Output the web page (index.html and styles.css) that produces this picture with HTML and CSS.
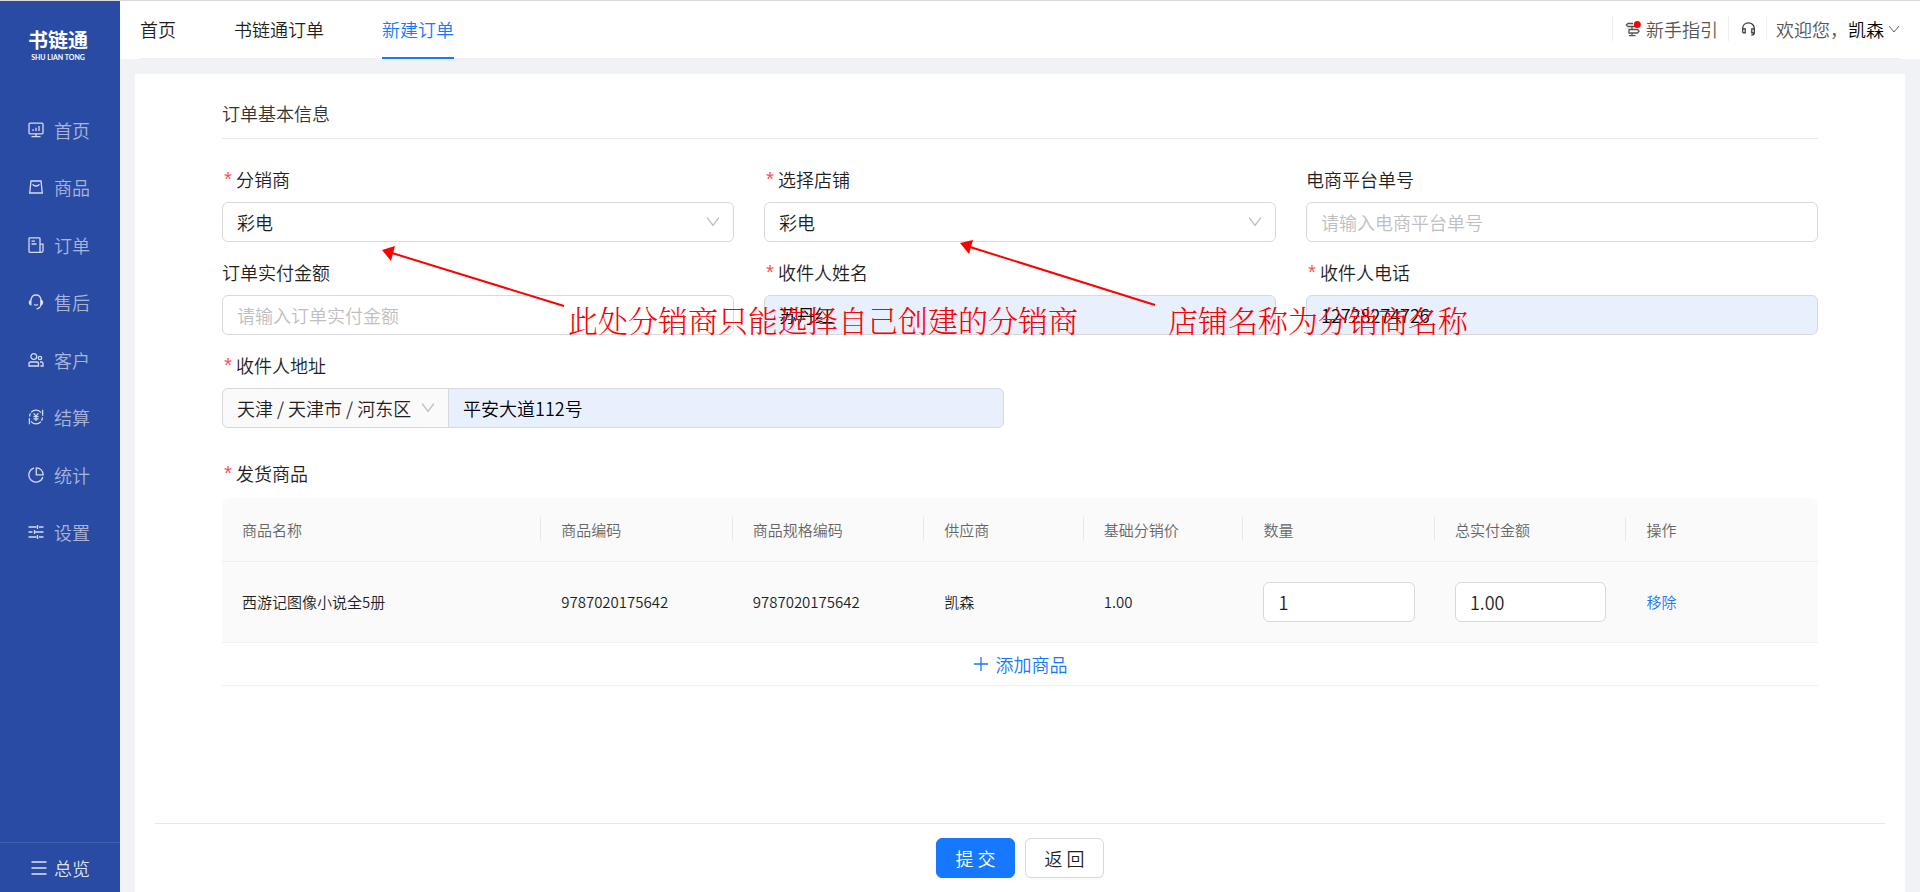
FILE: index.html
```html
<!DOCTYPE html>
<html lang="zh-CN">
<head>
<meta charset="utf-8">
<title>新建订单 - 书链通</title>
<link rel="stylesheet" href="styles.css">
</head>
<body>
<div class="app">
  <aside class="sidebar">
    <div class="logo">
      <span class="logo-name">书链通</span>
      <span class="logo-sub">SHU LIAN TONG</span>
    </div>
    <nav class="menu">
      <a class="menu-item" href="#"><svg class="icon" viewBox="0 0 16 16"><rect x="1" y="1.2" width="14" height="10.6" rx="1"/><path d="M8 12v2.4M3.5 14.7h9M5 9V7.2M8 9V5.8M11 9V4"/></svg>首页</a>
      <a class="menu-item" href="#"><svg class="icon" viewBox="0 0 16 16"><path d="M3 2h10l1.3 12H1.7zM4.8 5.2c.6 2.4 5.800 2.400 6.400 0"/></svg>商品</a>
      <a class="menu-item" href="#"><svg class="icon" viewBox="0 0 16 16"><path d="M12 15.300H1.700a.7.7 0 0 1-.7-.7V1.500a.7.7 0 0 1 .7-.7h9.600a.7.7 0 0 1 .7.7zM12 7.200h3v6.600a1.500 1.500 0 0 1-3 0M3.500 4.200h3.500M3.500 7h5"/></svg>订单</a>
      <a class="menu-item" href="#"><svg class="icon" viewBox="0 0 16 16"><path d="M3 6C3.300 3 5.200 1 8 1s4.700 2 5 5v4c-.2 3-2 4.600-4.500 4.900M6 10.500c1.200.8 2.800.8 4 0"/><path class="solid" d="M3.500 5.500v6C-.2 11.300-.2 5.700 3.500 5.500zM12.500 5.500v6c3.700-.2 3.700-5.800 0-6z"/></svg>售后</a>
      <a class="menu-item" href="#"><svg class="icon" viewBox="0 0 16 16"><circle cx="5.800" cy="4.500" r="2.900"/><circle cx="12" cy="6" r="1.700"/><path d="M1 14v-2.300C1 10.500 2 10 3 10h5.500c1.500 0 2 .8 2 1.700V14zM12 10h1.300c1.200 0 1.700.8 1.700 1.600V14h-2.600"/></svg>客户</a>
      <a class="menu-item" href="#"><svg class="icon" viewBox="0 0 16 16"><path d="M3.200 3.200C6 .2 10.500.4 13 3.600M14.600.8v6M12.800 12.800C10 15.800 5.500 15.600 3 12.400M1.400 15.200v-6M14.400 8.500c0 1.200-.3 2.300-.9 3.200M1.600 7.500c0-1.200.3-2.300.9-3.200M5.700 4.300 8 7.200l2.300-2.900M8 7.200V12M5.500 7.700h5M5.500 9.900h5"/></svg>结算</a>
      <a class="menu-item" href="#"><svg class="icon" viewBox="0 0 16 16"><path d="M6 1.200a7.100 7.100 0 1 0 8.800 8.800M8.300.8v7h6.900a7 7 0 0 0-6.900-7z"/></svg>统计</a>
      <a class="menu-item" href="#"><svg class="icon" viewBox="0 0 16 16"><path d="M.5 3h8M11 3h4.500M9.500 1v4M.5 8h4M6.500 8h9M6.500 6v4M.5 13h8M11 13h4.500M9.500 11v4"/></svg>设置</a>
    </nav>
    <a class="overview" href="#"><svg class="icon" viewBox="0 0 16 16"><path d="M.5 2h15M.5 8h15M.5 14h15"/></svg>总览</a>
  </aside>

  <div class="main">
    <header class="header">
      <div class="header-inner">
        <nav class="tabs">
          <a class="tab" href="#">首页</a>
          <a class="tab" href="#">书链通订单</a>
          <a class="tab tab-active" href="#">新建订单</a>
        </nav>
        <div class="tools">
          <a class="tool" href="#"><svg class="icon guide-icon" viewBox="0 0 16 16"><path d="M8 2.500H3L1.300 4 3 5.500h9M7 5.500V8.500M4 8.500h8.500l1.500 1.700-1.500 1.800H4zM7 12v2.500M4 14.700h6.500"/><circle class="dot" cx="12.300" cy="3.500" r="3.500"/></svg>新手指引</a>
          <a class="tool" href="#" aria-label="客服"><svg class="icon headset-icon" viewBox="0 0 16 16"><path d="M1.800 9V7.500C1.800 4 4.500 1.500 8 1.500s6.200 2.500 6.200 6V12c0 1.500-1 2.500-3.200 2.500M1.800 7.800h2.700v4.400H3c-.8 0-1.200-.5-1.200-1.200zM14.200 7.800h-2.700v4.400h2.700"/></svg></a>
          <a class="tool" href="#"><span>欢迎您，<span class="user">凯森</span></span><svg class="chevron-small" viewBox="0 0 12 12"><path d="M1 3l5 6 5-6"/></svg></a>
        </div>
      </div>
    </header>

    <main class="card">
      <form class="form">
        <h1 class="section-title">订单基本信息</h1>
        <div class="fields">
          <div class="field">
            <label class="label required" for="dealer">分销商</label>
            <div class="select-box"><select class="control" id="dealer"><option>彩电</option></select><svg class="chevron" viewBox="0 0 12 12"><path d="M0 1.500l6 8 6-8"/></svg></div>
          </div>
          <div class="field">
            <label class="label required" for="shop">选择店铺</label>
            <div class="select-box"><select class="control" id="shop"><option>彩电</option></select><svg class="chevron" viewBox="0 0 12 12"><path d="M0 1.500l6 8 6-8"/></svg></div>
          </div>
          <div class="field">
            <label class="label" for="platform">电商平台单号</label>
            <input class="control" id="platform" type="text" placeholder="请输入电商平台单号">
          </div>
          <div class="field">
            <label class="label" for="amount">订单实付金额</label>
            <input class="control" id="amount" type="text" placeholder="请输入订单实付金额">
          </div>
          <div class="field">
            <label class="label required" for="name">收件人姓名</label>
            <input class="control filled" id="name" type="text" value="苏丹红">
          </div>
          <div class="field">
            <label class="label required" for="phone">收件人电话</label>
            <input class="control filled" id="phone" type="text" value="12728274726">
          </div>
          <div class="field field-wide">
            <label class="label required" for="address">收件人地址</label>
            <div class="address">
              <div class="select-box region"><select class="control" aria-label="地区"><option>天津 / 天津市 / 河东区</option></select><svg class="chevron" viewBox="0 0 12 12"><path d="M0 1.500l6 8 6-8"/></svg></div>
              <input class="control filled street" id="address" type="text" value="平安大道112号">
            </div>
          </div>
        </div>

        <h2 class="label required goods-title">发货商品</h2>
        <table class="goods">
          <colgroup><col class="c20"><col class="c12"><col class="c12"><col class="c10"><col class="c10"><col class="c12"><col class="c12"><col class="c12"></colgroup>
          <thead>
            <tr><th>商品名称</th><th>商品编码</th><th>商品规格编码</th><th>供应商</th><th>基础分销价</th><th>数量</th><th>总实付金额</th><th>操作</th></tr>
          </thead>
          <tbody>
            <tr>
              <td>西游记图像小说全5册</td><td>9787020175642</td><td>9787020175642</td><td>凯森</td><td>1.00</td>
              <td><input class="control" type="text" value="1" aria-label="数量"></td>
              <td><input class="control" type="text" value="1.00" aria-label="总实付金额"></td>
              <td><a class="link" href="#">移除</a></td>
            </tr>
          </tbody>
        </table>
        <button class="add" type="button"><svg class="icon" viewBox="0 0 16 16"><path d="M8 1v14M1 8h14"/></svg>添加商品</button>
      </form>
      <footer class="actions">
        <button class="btn btn-primary" type="button">提 交</button>
        <button class="btn" type="button">返 回</button>
      </footer>
    </main>
  </div>

  <svg class="arrows" aria-hidden="true"><path class="line" d="M564 306 392 253M1155 305 970 247"/><path class="head" d="M382 250l13-4-4 15zM960 243l13-3-4 14z"/></svg>
  <p class="note note-dealer">此处分销商只能选择自己创建的分销商</p>
  <p class="note note-shop">店铺名称为分销商名称</p>
</div>
</body>
</html>
```

FILE: styles.css
```css
* { box-sizing: border-box; }

body {
  margin: 0;
  font-family: "Noto Sans CJK SC", sans-serif;
  font-weight: 350;
  font-size: 18px;
  line-height: 28px;
  color: #1f1f1f;
  background: #f0f2f5;
}

a { color: inherit; text-decoration: none; }

input, select, button {
  font: inherit;
  color: inherit;
}

.app {
  position: relative;
  display: flex;
  min-height: 100vh;
  border-top: 1px solid #d9d9d9;
}

.icon {
  flex: none;
  width: 16px;
  height: 16px;
  fill: none;
  stroke: currentColor;
  stroke-width: 1.3;
}

.icon .solid { fill: currentColor; stroke: none; }

/* Sidebar */
.sidebar {
  flex: none;
  display: flex;
  flex-direction: column;
  width: 120px;
  color: rgba(255, 255, 255, 0.6);
  background: #294ba3;
}

.logo {
  display: flex;
  flex-direction: column;
  align-items: center;
  height: 100px;
  padding: 27px 4px 0 0;
  color: #fff;
}

.logo-name {
  font-size: 20px;
  font-weight: 700;
  line-height: 24px;
}

.logo-sub {
  font-family: Lato, sans-serif;
  font-size: 7px;
  font-weight: 700;
  line-height: 10px;
}

.menu {
  display: grid;
  grid-auto-rows: 1fr;
  height: 460px;
}

.menu-item, .overview {
  display: flex;
  align-items: center;
  gap: 10px;
  padding-left: 28px;
}

.menu-item .icon { color: rgba(255, 255, 255, 0.8); }

.overview {
  gap: 7px;
  height: 50px;
  margin-top: auto;
  padding-left: 31px;
  border-top: 1px solid rgba(255, 255, 255, 0.12);
  color: rgba(255, 255, 255, 0.85);
}

/* Header */
.main {
  flex: 1;
  min-width: 0;
  display: flex;
  flex-direction: column;
}

.header {
  padding: 0 20px;
  background: #fff;
}

.header-inner {
  display: flex;
  justify-content: space-between;
  height: 58px;
  box-shadow: inset 0 -1px #f0f0f0;
}

.tabs { display: flex; gap: 58px; }

.tab {
  padding-top: 14px;
  border-bottom: 2px solid transparent;
}

.tab-active { color: #1677ff; border-color: #1677ff; }

.tools {
  display: flex;
  padding-top: 15px;
  color: #555;
}

.tool {
  display: flex;
  align-items: center;
  height: 25px;
  padding: 0 10px 0 12px;
  border-left: 1px solid #eee;
}

.tool:last-child { padding: 0 0 0 9px; }

.guide-icon { margin-right: 5px; }
.guide-icon .dot { fill: #f00; stroke: none; }
.headset-icon { width: 15px; stroke: #333; }
.user { color: #000; }

.chevron-small {
  width: 12px;
  height: 12px;
  margin-left: 4px;
  fill: none;
  stroke: #666;
}

/* Form */
.card {
  flex: 1;
  display: flex;
  flex-direction: column;
  margin: 15px 15px 0;
  background: #fff;
}

.form {
  flex: 1;
  padding: 25px 87px;
}

.section-title {
  margin: 0 0 27px;
  padding-bottom: 11px;
  border-bottom: 1px solid #e8e8ee;
  font-size: 18px;
  font-weight: 350;
  color: #333;
}

.fields {
  display: grid;
  grid-template-columns: repeat(3, 1fr);
  gap: 17px 30px;
}

.field {
  display: flex;
  flex-direction: column;
  gap: 8px;
  min-width: 0;
}

.field-wide { grid-column: 1 / -1; }

.label {
  display: flex;
  height: 28px;
  margin: 0;
  font-size: 18px;
  font-weight: 350;
  line-height: 26px;
}

.required::before {
  content: "*";
  width: 14px;
  padding-top: 3px;
  font-family: "Liberation Mono", monospace;
  font-size: 20px;
  color: #ff4d4f;
}

.control {
  display: block;
  width: 100%;
  height: 40px;
  padding: 0 14px;
  border: 1px solid #d9d9d9;
  border-radius: 6px;
  background: #fff;
  appearance: none;
}

.control::placeholder { color: #bfbfbf; }

.filled { background: #e8f0fe; color: #000; }

.select-box { position: relative; }

.chevron {
  position: absolute;
  top: 14px;
  right: 15px;
  width: 12px;
  height: 12px;
  fill: none;
  stroke: #bfbfbf;
  stroke-width: 1.300;
  pointer-events: none;
}

.address { display: flex; width: 49%; }
.region { flex: none; width: 227px; }
.region .control { background: #fafafa; border-radius: 6px 0 0 6px; }
.street { margin-left: -1px; border-radius: 0 6px 6px 0; }

/* Goods */
.goods-title { margin: 32px 0 10px; }

.goods {
  width: 100%;
  table-layout: fixed;
  border-spacing: 0;
  font-size: 15px;
  background: #fafafa;
  border-radius: 8px 8px 0 0;
}

.c20 { width: 20%; }
.c12 { width: 12%; }
.c10 { width: 10%; }

.goods th, .goods td {
  height: 64px;
  padding: 0 20px;
  border-bottom: 1px solid #f0f0f0;
  text-align: left;
  font-weight: 350;
}

.goods th { position: relative; color: #666; }

.goods th:not(:last-child)::after {
  content: "";
  position: absolute;
  top: 19px;
  right: 0;
  width: 1px;
  height: 24px;
  background: #e8e8e8;
}

.goods td { height: 81px; }
.goods .control { font-size: 18px; }

.link { color: #1677ff; }

.add {
  display: flex;
  align-items: center;
  justify-content: center;
  gap: 7px;
  width: 100%;
  height: 43px;
  padding: 0;
  border: 0;
  border-bottom: 1px solid #f0f0f0;
  background: none;
  color: #1677ff;
}

/* Footer */
.actions {
  display: flex;
  justify-content: center;
  gap: 10px;
  margin: 0 20px;
  padding: 14px 0;
  border-top: 1px solid #e8e8e8;
}

.btn {
  width: 79px;
  height: 40px;
  padding: 0;
  border: 1px solid #d9d9d9;
  border-radius: 6px;
  background: #fff;
  box-shadow: 0 2px 0 rgba(0, 0, 0, 0.02);
}

.btn-primary { border-color: #1677ff; background: #1677ff; color: #fff; }

/* Annotations laid over the form */
.arrows {
  position: absolute;
  top: -1px;
  left: 0;
  width: 100%;
  height: 100%;
  pointer-events: none;
}

.arrows .line { fill: none; stroke: #f00; stroke-width: 2; }
.arrows .head { fill: #f00; }

.note {
  position: absolute;
  top: 298px;
  margin: 0;
  font-family: "Noto Serif CJK SC", "Noto Sans CJK SC", serif;
  font-size: 30px;
  font-weight: 300;
  line-height: 40px;
  color: #f00;
  white-space: nowrap;
  pointer-events: none;
}

.note-dealer { left: 568px; }
.note-shop { left: 1168px; }
```
